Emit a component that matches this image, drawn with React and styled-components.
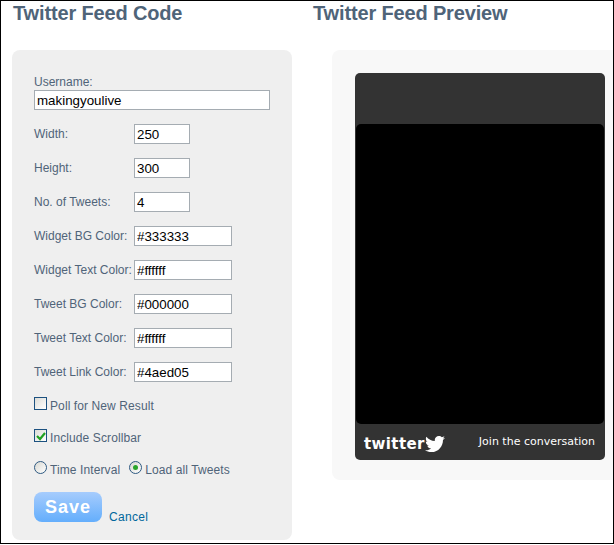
import React from 'react';
import styled, { createGlobalStyle } from 'styled-components';
import { FaTwitter } from 'react-icons/fa';

const GlobalStyle = createGlobalStyle`
  html, body {
    margin: 0;
    padding: 0;
    background: #fff;
    font-family: "Liberation Sans", Arial, sans-serif;
  }
`;

const Page = styled.div`
  box-sizing: border-box;
  width: 614px;
  height: 544px;
  border: 1px solid #000;
  background: #fff;
  display: flex;
  padding-left: 11px;
  overflow: hidden;
`;

const Column = styled.div`
  width: ${(p) => p.$width}px;
  flex: none;
`;

const Title = styled.h2`
  margin: 0;
  height: 49px;
  padding-left: 1px;
  font-size: 20px;
  line-height: 24px;
  font-weight: bold;
  letter-spacing: -0.15px;
  color: #4f6479;
`;

const FormPanel = styled.div`
  box-sizing: border-box;
  width: 280px;
  height: 490px;
  padding: 25px 22px 0;
  background: #efefef;
  border-radius: 8px;
`;

const Label = styled.label`
  display: block;
  font-size: 12px;
  line-height: 15px;
  color: #4f6479;
`;

const TextInput = styled.input`
  box-sizing: border-box;
  display: block;
  width: ${(p) => p.$width}px;
  height: 20px;
  padding: 0 2px;
  border: 1px solid #a5acb2;
  border-radius: 0;
  background: #fff;
  outline: none;
  font-family: "Liberation Sans", Arial, sans-serif;
  font-size: 13.33px;
  color: #000;
`;

const Row = styled.div`
  display: flex;
  align-items: center;
  height: 20px;
  margin-top: 14px;
`;

const RowLabel = styled(Label)`
  width: 100px;
  flex: none;
  white-space: nowrap;
`;

const Options = styled.div`
  display: flex;
  flex-direction: column;
  gap: 18px;
  margin-top: 15px;
`;

const Option = styled.div`
  display: flex;
  align-items: flex-start;
  height: 14px;
  font-size: 12px;
  line-height: 18px;
  color: #4f6479;
  letter-spacing: 0.1px;
`;

const CheckBox = styled.span`
  box-sizing: border-box;
  width: 13px;
  height: 13px;
  margin-right: 3px;
  flex: none;
  border: 1px solid #1c5180;
  background: linear-gradient(135deg, #dcdcd7, #ffffff);
  display: flex;
  align-items: center;
  justify-content: center;
`;

const RadioDot = styled.span`
  box-sizing: border-box;
  width: 13px;
  height: 13px;
  margin-right: 3px;
  flex: none;
  border: 1px solid #2f5a82;
  border-radius: 50%;
  background: linear-gradient(135deg, #d8d8d2, #ffffff);
  display: flex;
  align-items: center;
  justify-content: center;

  &::after {
    content: '';
    display: ${(p) => (p.$on ? 'block' : 'none')};
    width: 5px;
    height: 5px;
    border-radius: 50%;
    background: #2aa52a;
  }
`;

const RadioText = styled.span`
  margin-right: 9px;
`;

const Actions = styled.div`
  display: flex;
  align-items: flex-end;
  gap: 7px;
  margin-top: 17px;
`;

const SaveButton = styled.button`
  width: 68px;
  height: 30px;
  padding: 0;
  border: none;
  border-radius: 8px;
  background: linear-gradient(#a6ccfd, #64aefc);
  color: #fff;
  font-family: "Liberation Sans", Arial, sans-serif;
  font-size: 18px;
  font-weight: bold;
  letter-spacing: 1px;
`;

const CancelLink = styled.a`
  font-size: 12px;
  line-height: 14px;
  letter-spacing: 0.3px;
  color: #00679c;
  margin-bottom: -2px;
`;

const PreviewPanel = styled.div`
  box-sizing: border-box;
  width: 281px;
  height: 430px;
  margin-left: 20px;
  padding: 23px 0 0 23px;
  background: #f8f8f8;
  border-radius: 8px 0 0 8px;
`;

const Widget = styled.div`
  box-sizing: border-box;
  width: 250px;
  height: 387px;
  padding: 51px 1px 0;
  background: #333;
  border-radius: 5px;
`;

const Tweets = styled.div`
  height: 300px;
  background: #000;
  border-radius: 5px;
`;

const WidgetFooter = styled.div`
  display: flex;
  align-items: center;
  justify-content: space-between;
  height: 36px;
  padding: 0 9px 0 8px;
  color: #fff;
`;

const Logo = styled.div`
  display: flex;
  align-items: center;
  margin-top: 4px;
  font-family: "DejaVu Sans", sans-serif;
  font-size: 15px;
  font-weight: bold;
  letter-spacing: 0.4px;
`;

const Join = styled.span`
  margin-top: -1px;
  font-family: "DejaVu Sans", sans-serif;
  font-size: 11px;
  color: #fff;
`;

const sizeFields = [
  ['Width:', '250'],
  ['Height:', '300'],
  ['No. of Tweets:', '4'],
];

const colorFields = [
  ['Widget BG Color:', '#333333'],
  ['Widget Text Color:', '#ffffff'],
  ['Tweet BG Color:', '#000000'],
  ['Tweet Text Color:', '#ffffff'],
  ['Tweet Link Color:', '#4aed05'],
];

const App = () => (
  <>
    <GlobalStyle />
    <Page>
      <Column $width={300}>
        <Title>Twitter Feed Code</Title>
        <FormPanel>
          <Label>Username:</Label>
          <TextInput $width={236} defaultValue="makingyoulive" />
          {sizeFields.map(([label, value]) => (
            <Row key={label}>
              <RowLabel>{label}</RowLabel>
              <TextInput $width={56} defaultValue={value} />
            </Row>
          ))}
          {colorFields.map(([label, value]) => (
            <Row key={label}>
              <RowLabel>{label}</RowLabel>
              <TextInput $width={98} defaultValue={value} />
            </Row>
          ))}
          <Options>
            <Option>
              <CheckBox />
              Poll for New Result
            </Option>
            <Option>
              <CheckBox>
                <svg width="10" height="10" viewBox="0 0 10 10">
                  <path d="M1 5 L4 8 L9 2" fill="none" stroke="#21a121" strokeWidth="2.2" />
                </svg>
              </CheckBox>
              Include Scrollbar
            </Option>
            <Option>
              <RadioDot />
              <RadioText>Time Interval</RadioText>
              <RadioDot $on />
              <RadioText>Load all Tweets</RadioText>
            </Option>
          </Options>
          <Actions>
            <SaveButton>Save</SaveButton>
            <CancelLink>Cancel</CancelLink>
          </Actions>
        </FormPanel>
      </Column>
      <Column $width={301}>
        <Title>Twitter Feed Preview</Title>
        <PreviewPanel>
          <Widget>
            <Tweets />
            <WidgetFooter>
              <Logo>
                twitter
                <FaTwitter size={20} />
              </Logo>
              <Join>Join the conversation</Join>
            </WidgetFooter>
          </Widget>
        </PreviewPanel>
      </Column>
    </Page>
  </>
);

export default App;
